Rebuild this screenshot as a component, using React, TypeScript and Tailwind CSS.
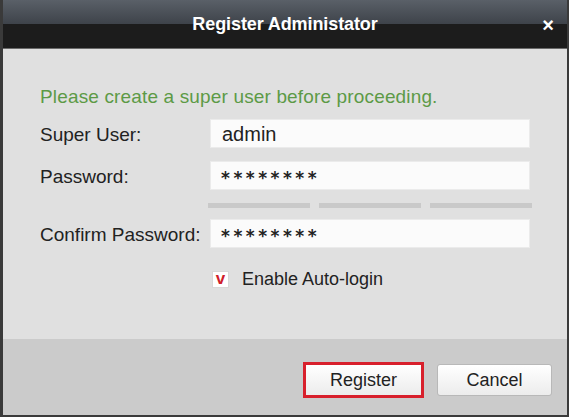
import React from "react";

export default function App() {
  const font = { fontFamily: '"Liberation Sans", Arial, sans-serif' };
  const stars = { fontFamily: '"DejaVu Sans", sans-serif' };
  return (
    <div
      className="w-[569px] h-[417px] flex flex-col overflow-hidden bg-[#e0e0e0] border-l-[3px] border-r-[2px] border-b-[2px] border-[#3a3a3a]"
      style={font}
    >
      {/* Title bar */}
      <div className="relative h-[49px] shrink-0 flex flex-col">
        <div className="h-[24px] bg-gradient-to-b from-[#5a6068] to-[#3e434a]" />
        <div className="flex-1 bg-[#1c1c1c] border-b border-[#6a6a6a]" />
        <div className="absolute inset-0 flex items-center justify-center text-white font-bold text-[18px] tracking-[-0.1px]">
          Register Administator
        </div>
        <div className="absolute right-[13px] top-0 h-full flex items-center text-white font-bold text-[20px]">
          ×
        </div>
      </div>

      {/* Body */}
      <div className="flex-1 flex flex-col pl-[37px] text-[19px] text-[#222]">
        <div className="mt-[37px] h-[22px] leading-[22px] text-[#5c9a46] tracking-[0.15px]">
          Please create a super user before proceeding.
        </div>

        <div className="mt-[11px] flex items-center h-[29px]">
          <div className="w-[170px] pt-[4px]">Super User:</div>
          <div className="w-[320px] h-[29px] bg-[#fbfbfb] border border-[#ebebeb] flex items-center pl-[11px] text-[20px] text-[#222]">
            admin
          </div>
        </div>

        <div className="mt-[13px] flex items-center h-[29px]">
          <div className="w-[170px] pt-[4px]">Password:</div>
          <div className="w-[320px] h-[29px] bg-[#fbfbfb] border border-[#ebebeb] flex items-center pl-[10px] text-[#222]">
            <span style={stars} className="text-[17px] font-bold tracking-[3.5px] translate-y-[3px]">********</span>
          </div>
        </div>

        <div className="mt-[13px] flex h-[5px] ml-[168px] gap-[9px]">
          <div className="w-[102px] bg-[#c9c9c9]" />
          <div className="w-[102px] bg-[#c9c9c9]" />
          <div className="w-[102px] bg-[#c9c9c9]" />
        </div>

        <div className="mt-[11px] flex items-center h-[29px]">
          <div className="w-[170px] pt-[3px]">Confirm Password:</div>
          <div className="w-[320px] h-[29px] bg-[#fbfbfb] border border-[#ebebeb] flex items-center pl-[10px] text-[#222]">
            <span style={stars} className="text-[17px] font-bold tracking-[3.5px] translate-y-[3px]">********</span>
          </div>
        </div>

        <div className="mt-[21px] flex items-center h-[20px] ml-[172px] text-[18px]">
          <div className="w-[17px] h-[17px] bg-white border border-[#d8d8d8] flex items-center justify-center text-[#d0202a] font-bold text-[17px] leading-none pb-[1px]">
            v
          </div>
          <div className="ml-[13px]">Enable Auto-login</div>
        </div>
      </div>

      {/* Footer */}
      <div className="h-[76px] shrink-0 bg-[#cbcbcb] flex justify-end items-start pt-[23px] pr-[15px] text-[18px] text-[#222]">
        <div className="w-[121px] h-[36px] border-[3px] border-[#d8202c] flex items-center justify-center bg-gradient-to-b from-white to-[#ececec]">
          Register
        </div>
        <div className="ml-[13px] mt-[2px] w-[115px] h-[32px] rounded-[3px] border border-[#b8b8b8] bg-gradient-to-b from-white to-[#ececec] flex items-center justify-center">
          Cancel
        </div>
      </div>
    </div>
  );
}
